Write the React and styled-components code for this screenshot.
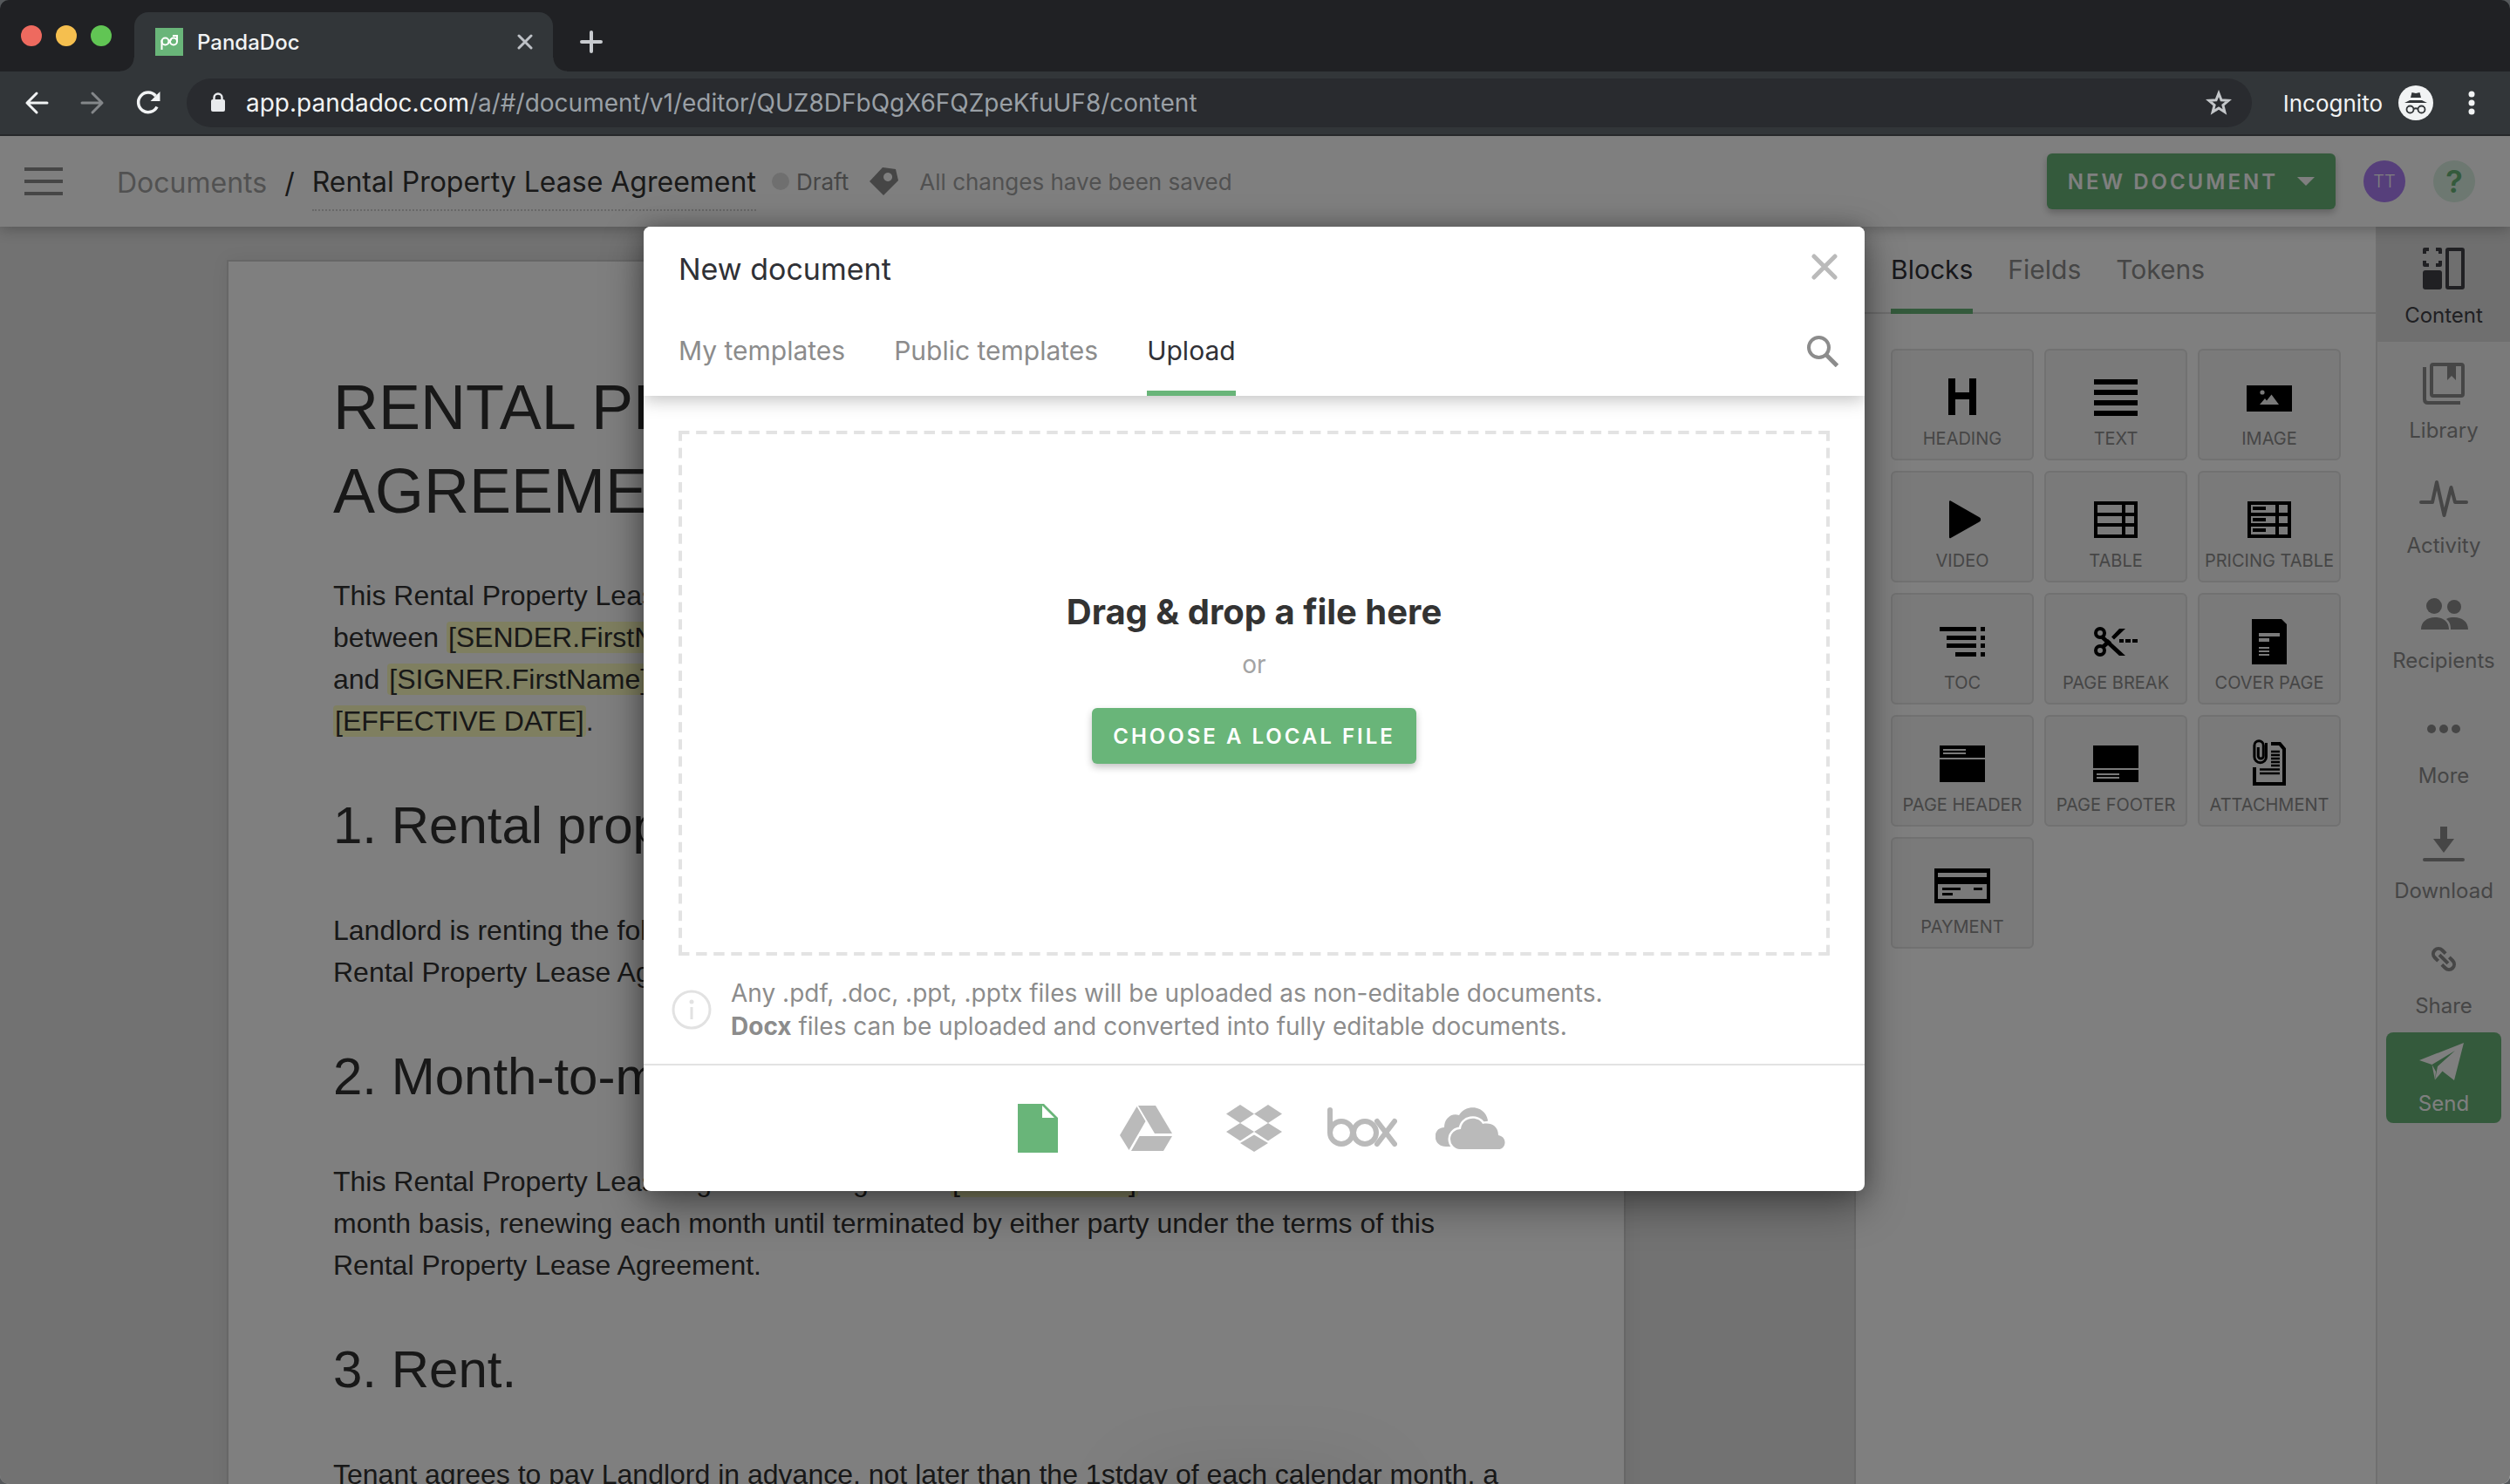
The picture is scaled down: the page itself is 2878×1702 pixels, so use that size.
import React from "react";
import styled, { createGlobalStyle, css } from "styled-components";

const ui = `Inter, "Open Sans", "Liberation Sans", sans-serif`;
const doc = `"Liberation Sans", Arial, sans-serif`;
const green = "#69b579";

const Global = createGlobalStyle`
  *, *::before, *::after { box-sizing: border-box; }
  html, body { margin: 0; background: #55585b; }
  body { font-family: ${ui}; overflow: hidden; }
  button { font: inherit; color: inherit; border: 0; padding: 0; margin: 0; background: none; cursor: pointer; }
  a { color: inherit; text-decoration: none; }
  h1, h2, p { margin: 0; font-weight: 400; }
  svg { display: block; flex: none; }
`;

const Window = styled.div`
  height: 100vh;
  display: flex;
  flex-direction: column;
  overflow: hidden;
  border-radius: 10px;
`;

/* ---------- Browser chrome ---------- */

const TabStrip = styled.div`
  display: flex;
  align-items: center;
  height: 82px;
  background: #202124;
`;

const Lights = styled.div`
  display: flex;
  gap: 16px;
  padding: 0 26px 0 24px;
`;

const Light = styled.span`
  width: 24px;
  height: 24px;
  border-radius: 50%;
  background: ${(p) => p.$color};
`;

const BrowserTab = styled.div`
  position: relative;
  align-self: flex-end;
  display: flex;
  align-items: center;
  gap: 16px;
  width: 480px;
  height: 68px;
  padding: 0 20px 0 24px;
  border-radius: 16px 16px 0 0;
  background: #323639;
  color: #f1f3f4;
  font-size: 24px;
  font-weight: 500;

  &::before,
  &::after {
    content: "";
    position: absolute;
    bottom: 0;
    width: 16px;
    height: 16px;
  }
  &::before {
    left: -16px;
    background: radial-gradient(circle at 0 0, #202124 15px, #323639 16px);
  }
  &::after {
    right: -16px;
    background: radial-gradient(circle at 100% 0, #202124 15px, #323639 16px);
  }
`;

const TabTitle = styled.span`
  flex: 1;
`;

const ChromeButton = styled.button`
  display: grid;
  place-items: center;
  width: ${(p) => p.$size || 64}px;
  height: ${(p) => p.$size || 64}px;
  color: ${(p) => p.$color || "#f1f3f4"};
`;

const NewTab = styled(ChromeButton)`
  margin: 14px 0 0 28px;
`;

const Toolbar = styled.div`
  display: flex;
  align-items: center;
  height: 74px;
  padding: 0 12px 0 10px;
  background: #323639;
  border-bottom: 2px solid #26282a;
`;

const AddressBar = styled.div`
  flex: 1;
  display: flex;
  align-items: center;
  gap: 22px;
  height: 56px;
  margin: 0 36px 0 12px;
  padding: 0 6px 0 26px;
  border-radius: 28px;
  background: #292b2f;
  color: #9aa0a6;
  font-size: 28px;
`;

const Url = styled.span`
  flex: 1;
  white-space: nowrap;
`;

const Host = styled.span`
  color: #f1f3f4;
`;

const Incognito = styled.div`
  display: flex;
  align-items: center;
  gap: 18px;
  margin-right: 12px;
  color: #f1f3f4;
  font-size: 26px;
`;

/* ---------- App frame ---------- */

const AppArea = styled.div`
  position: relative;
  flex: 1;
  min-height: 0;
  display: flex;
  flex-direction: column;
  overflow: hidden;
  background: #e4e4e4;
`;

const Header = styled.header`
  position: relative;
  z-index: 1;
  display: flex;
  align-items: center;
  height: 104px;
  flex: none;
  padding: 0 40px 0 28px;
  background: #fff;
  box-shadow: 0 2px 16px rgba(0, 0, 0, 0.28);
`;

const Crumbs = styled.nav`
  display: flex;
  align-items: center;
  gap: 20px;
  margin-left: 66px;
  padding-top: 4px;
  font-size: 32px;
  line-height: 62px;
  color: #333;
  white-space: nowrap;
`;

const CrumbLink = styled.a`
  color: #a3a3a3;
`;

const DocName = styled.span`
  border-bottom: 2px dotted #d0d0d0;
`;

const Status = styled.div`
  flex: 1;
  display: flex;
  align-items: center;
  gap: 24px;
  margin-left: 18px;
  font-size: 26px;
  color: #a3a3a3;
  white-space: nowrap;
`;

const Draft = styled.span`
  display: flex;
  align-items: center;
  gap: 8px;
  color: #8c8c8c;

  &::before {
    content: "";
    width: 20px;
    height: 20px;
    border-radius: 50%;
    background: #dedede;
  }
`;

const PrimaryButton = styled.button`
  display: flex;
  align-items: center;
  justify-content: center;
  gap: 22px;
  height: 64px;
  padding: 0 24px;
  min-width: ${(p) => p.$min}px;
  border-radius: 6px;
  background: ${green};
  color: #fff;
  font-size: 24px;
  font-weight: 600;
  letter-spacing: 3px;
  white-space: nowrap;
  box-shadow: 0 4px 8px rgba(0, 0, 0, 0.24);
`;

const Round = styled.button`
  display: grid;
  place-items: center;
  width: 48px;
  height: 48px;
  margin-left: 32px;
  border-radius: 50%;
  background: ${(p) => p.$bg};
  color: ${(p) => p.$color};
  font-size: ${(p) => p.$font}px;
  font-weight: ${(p) => p.$weight};
`;

const Body = styled.div`
  flex: 1;
  min-height: 0;
  display: flex;
`;

/* ---------- Document ---------- */

const Canvas = styled.main`
  flex: 1;
  min-width: 0;
  display: flex;
  justify-content: center;
  align-items: flex-start;
  padding: 38px 2px 0 0;
  overflow: hidden;
`;

const Sheet = styled.article`
  width: 1604px;
  min-height: 2200px;
  padding: 119px 120px;
  border: 2px solid #cfcfcf;
  background: #fff;
  box-shadow: 0 0 20px rgba(0, 0, 0, 0.06);
  color: #303030;
  font-family: ${doc};
`;

const Title = styled.h1`
  font-size: 72px;
  line-height: 96px;
  margin-bottom: 48px;
`;

const Section = styled.h2`
  font-size: 60px;
  line-height: 80px;
  margin: 56px 0;
`;

const Para = styled.p`
  font-size: 32px;
  line-height: 48px;
`;

const Token = styled.span`
  padding: 0 2px;
  border-radius: 4px;
  background: #ffffc0;
`;

/* ---------- Blocks panel ---------- */

const Panel = styled.aside`
  width: 598px;
  flex: none;
  border-left: 2px solid #d4d4d4;
  background: #fff;
`;

const TabList = styled.div`
  display: flex;
  gap: ${(p) => p.$gap}px;
  padding: 0 40px;
`;

const PanelTabs = styled(TabList)`
  border-bottom: 2px solid #dedede;
`;

const tabLook = css`
  font-size: 30px;
  white-space: nowrap;
  color: ${(p) => (p.$active ? "#303136" : "#8c8c8c")};
  border-bottom: 6px solid ${(p) => (p.$active ? green : "transparent")};
`;

const PanelTab = styled.button`
  ${tabLook}
  height: 100px;
  margin-bottom: -2px;
  padding-top: 4px;
`;

const TileGrid = styled.div`
  display: grid;
  grid-template-columns: repeat(3, 164px);
  gap: 12px;
  padding: 40px;
`;

const Tile = styled.button`
  display: flex;
  flex-direction: column;
  align-items: center;
  gap: 3px;
  height: 128px;
  padding-top: 22px;
  border: 2px solid #e2e2e2;
  border-radius: 6px;
  background: #f4f4f4;
  color: #8c8c8c;
  font-size: 20px;
  line-height: 24px;
  white-space: nowrap;

  svg {
    color: #000;
  }
`;

/* ---------- Right rail ---------- */

const Rail = styled.nav`
  width: 154px;
  flex: none;
  display: flex;
  flex-direction: column;
  border-left: 2px solid #e0e0e0;
  background: #f4f4f4;
`;

const RailItem = styled.button`
  display: flex;
  flex-direction: column;
  align-items: center;
  gap: 11px;
  height: 132px;
  padding-top: 20px;
  font-size: 24px;
  line-height: 30px;
  color: ${(p) => (p.$active ? "#404147" : "#8c8c8c")};
  background: ${(p) => (p.$active ? "#dedede" : "transparent")};
`;

const SendButton = styled.button`
  display: flex;
  flex-direction: column;
  align-items: center;
  gap: 11px;
  height: 104px;
  margin: 0 10px;
  padding-top: 12px;
  border-radius: 8px;
  background: ${green};
  color: #fff;
  font-size: 24px;
  line-height: 30px;
`;

/* ---------- Overlay and dialog ---------- */

const Overlay = styled.div`
  position: absolute;
  inset: 0;
  z-index: 2;
  display: flex;
  justify-content: center;
  align-items: flex-start;
  padding: 104px 2px 0 0;
  background: rgba(0, 0, 0, 0.5);
`;

const Toast = styled.div`
  position: absolute;
  left: calc(50% - 140px);
  top: 100%;
  width: 280px;
  height: 60px;
  border-radius: 30px;
  box-shadow: 0 0 100px rgba(0, 0, 0, 0.14);
`;

const Dialog = styled.section`
  width: 1400px;
  max-width: 96%;
  border-radius: 8px;
  overflow: clip;
  background: #fff;
  color: #303136;
  box-shadow: 0 16px 48px rgba(0, 0, 0, 0.4), 0 0 24px rgba(0, 0, 0, 0.24);
`;

const DialogHead = styled.div`
  position: relative;
  background: #fff;
  box-shadow: 0 4px 20px rgba(0, 0, 0, 0.26);
`;

const DialogRow = styled.div`
  display: flex;
  align-items: center;
  justify-content: space-between;
  height: ${(p) => p.$height}px;
  padding-right: ${(p) => p.$end}px;
`;

const DialogTitle = styled.h2`
  padding: 4px 0 0 40px;
  font-size: 34px;
`;

const DialogTab = styled.button`
  ${tabLook}
  height: 102px;
  padding-top: 4px;
`;

const IconButton = styled.button`
  display: grid;
  place-items: center;
  width: 40px;
  height: 40px;
  color: ${(p) => p.$color};
`;

const DialogBody = styled.div`
  padding: 40px 40px 24px;
`;

const dash = "#e3e3e3";
const DropZone = styled.div`
  display: flex;
  flex-direction: column;
  align-items: center;
  justify-content: center;
  height: 602px;
  padding-bottom: 40px;
  --h: linear-gradient(90deg, ${dash} 12px, transparent 12px);
  --v: linear-gradient(180deg, ${dash} 12px, transparent 12px);
  --w: calc((100% - 12px) / 65) 4px;
  --t: 4px calc((100% - 12px) / 30);
  background-image: var(--h), var(--h), var(--v), var(--v);
  background-size: var(--w), var(--w), var(--t), var(--t);
  background-repeat: repeat-x, repeat-x, repeat-y, repeat-y;
  background-position: left top, left bottom, left top, right top;
`;

const DropTitle = styled.p`
  font-size: 40px;
  line-height: 56px;
  font-weight: 700;
  color: #333;
`;

const Or = styled.p`
  margin: 12px 0 30px;
  font-size: 28px;
  line-height: 40px;
  color: #a3a3a3;
`;

const Note = styled.div`
  display: flex;
  align-items: center;
  gap: 22px;
  margin: 24px 0 0 -8px;
  font-size: 28px;
  line-height: 38px;
  color: #8c8c8c;
`;

const Sources = styled.div`
  display: flex;
  justify-content: center;
  height: 146px;
  border-top: 2px solid #e2e2e2;
`;

const Source = styled.button`
  display: grid;
  place-items: center;
  width: 124px;
  color: ${(p) => (p.$active ? green : "#bababa")};
`;

/* ---------- Drawings ---------- */

const Art = ({ w, h, children, ...rest }) => (
  <svg width={w} height={h} viewBox={`0 0 ${w} ${h}`} fill="currentColor" aria-hidden="true" {...rest}>
    {children}
  </svg>
);

const Stroke = ({ width = 4, ...rest }) => (
  <Art fill="none" stroke="currentColor" strokeWidth={width} strokeLinecap="round" strokeLinejoin="round" {...rest} />
);

const tileHole = "#f4f4f4";
const Bars = ({ list, fill }) =>
  list.map(([x, y, w, h]) => <rect key={`${x}-${y}`} x={x} y={y} width={w} height={h} fill={fill} />);

const tableCells = [15, 28, 40].flatMap((y, i) => [
  [11, y, 28, i === 1 ? 8 : 9],
  [43, y, 10, i === 1 ? 8 : 9],
]);

const tiles = [
  ["HEADING", <Bars list={[[16, 10, 8, 42], [40, 10, 8, 42], [20, 26, 24, 8]]} />],
  ["TEXT", <Bars list={[[7, 11, 50, 6], [7, 23, 50, 6], [7, 35, 50, 6], [7, 47, 50, 6]]} />],
  ["IMAGE", <>
    <rect x="6" y="18" width="52" height="30" />
    <g fill={tileHole}><circle cx="24" cy="26" r="2.6" /><path d="M21 40l6-7 2 2.6 5.5-7L43 40z" /></g>
  </>],
  ["VIDEO", <path d="M17 11.5c0-1 1-1.6 1.8-1L52 29.5c1.6 1.2 1.6 3.6 0 4.8L18.8 53c-.8.6-1.8 0-1.8-1z" />],
  ["TABLE", <>
    <rect x="7" y="11" width="50" height="42" /><Bars list={tableCells} fill={tileHole} />
  </>],
  ["PRICING TABLE", <>
    <rect x="7" y="11" width="50" height="42" /><Bars list={tableCells} fill={tileHole} />
    <Bars list={[[13, 17, 15, 4], [13, 30, 15, 4], [13, 42, 15, 4]]} />
  </>],
  ["TOC", <Bars list={[[6, 15, 42, 5], [53, 15, 5, 5], [14, 25, 34, 5], [53, 25, 5, 5], [14, 34, 34, 5], [53, 34, 5, 5], [24, 44, 24, 5], [53, 44, 5, 5]]} />],
  ["PAGE BREAK", <>
    <g fill="none" stroke="currentColor" strokeWidth="4"><circle cx="14" cy="22" r="5" /><circle cx="14" cy="42" r="5" /></g>
    <path d="M17.5 24.5L43 48h-7L15 28.5zM16 36l7-7 4 3.5-8 7zM27 26.500L36 17h7L30 29.500z" />
    <Bars list={[[36, 29, 5, 4], [43, 29, 6, 4], [51, 29, 6, 4]]} />
  </>],
  ["COVER PAGE", <>
    <path d="M12 6h34l6 6v46H12z" />
    <Bars fill={tileHole} list={[[20, 22, 24, 4], [20, 28, 12, 4], [20, 38, 12, 2], [20, 42, 12, 2], [20, 46, 12, 2]]} />
  </>],
  ["PAGE HEADER", <>
    <Bars list={[[6, 11, 52, 14], [6, 27, 52, 26]]} />
    <Bars fill={tileHole} list={[[10, 15, 26, 2], [10, 19, 26, 2]]} />
  </>],
  ["PAGE FOOTER", <>
    <Bars list={[[6, 11, 52, 26], [6, 39, 52, 14]]} />
    <Bars fill={tileHole} list={[[10, 43, 26, 2], [10, 47, 26, 2]]} />
  </>],
  ["ATTACHMENT", <g fill="none" stroke="currentColor">
    <path strokeWidth="4" d="M34 9h10l5 6v40H15V36" />
    <path strokeWidth="3" d="M28.5 8v16a6.800 6.800 0 0 1-13.6 0V11a5.200 5.200 0 0 1 10.4 0v12a3 3 0 0 1-6 0V13" />
    <path strokeWidth="2.5" d="M34 18h10M34 22h10M34 26h10M34 30h10M34 34h10M21 38.5h23M21 43h23" />
  </g>],
  ["PAYMENT", <>
    <rect y="12" width="64" height="40" />
    <Bars fill={tileHole} list={[[4, 17, 56, 5], [4, 30, 56, 17]]} />
    <Bars list={[[9, 34, 21, 3], [45, 34, 10, 3], [9, 40, 12, 3]]} />
  </>],
];

const round = { fill: "none", stroke: "currentColor", strokeWidth: 4, strokeLinejoin: "round" };

const railItems = [
  ["Content", <>
    <path {...round} d="M6 11V6h5M19 6h5v5M24 19v5h-5M11 24H6v-5" />
    <rect x="4" y="30" width="22" height="22" rx="3" />
    <rect {...round} x="32" y="6" width="18" height="44" rx="1" />
  </>],
  ["Library", <>
    <rect {...round} x="14" y="6" width="36" height="36" rx="2" />
    <path d="M32 6h10v18l-5-5-5 5z" />
    <path {...round} strokeLinecap="butt" d="M6 9v37q0 4 4 4h37" />
  </>],
  ["Activity", <path {...round} strokeLinecap="round" d="M2 32h13l5-23 8.500 38 8-32L41 32h13" />],
  ["Recipients", <>
    <circle cx="17" cy="19" r="9" /><circle cx="40" cy="20" r="8" />
    <path d="M2 46c0-9 7-14 16-14s16 5 16 14zM31 34c3-2 6-2 9-2 9 0 16 5 16 14H36c0-5-1-9-5-12z" />
  </>],
  ["More", <><circle cx="14" cy="28" r="5" /><circle cx="28" cy="28" r="5" /><circle cx="42" cy="28" r="5" /></>],
  ["Download", <><path d="M24 8h8v14h8L28 38 16 22h8z" /><rect x="4" y="44" width="48" height="4" rx="2" /></>],
  ["Share", <g {...round} transform="translate(28 28) rotate(45)">
    <path d="M-3-6h-5.500a6 6 0 0 0 0 12H-3M3-6h5.500a6 6 0 0 1 0 12H3M-7 0H7" />
  </g>],
];

const sources = [
  ["Local file", <Art w={46} h={56}><path fillRule="evenodd" d="M0 0h30l16 16v40H0zM28 2v14h14z" /></Art>],
  ["Google Drive", <Art w={60} h={52}>
    <path d="M21 0h20l19 32H40zM22.600 35H60l-10 17H13zM19.500 1l10 17-19 33L0 34z" />
  </Art>],
  ["Dropbox", <Art w={64} h={54}>
    <path d="M16 0l16 10.500L16 21 0 10.500zM48 0l16 10.500L48 21 32 10.500zM16 21l16 10-16 10.500L0 31zM48 21l16 10-16 10.500L32 31zM32 34.500L48 44 32 54 16 44z" />
  </Art>],
  ["Box", <Stroke w={80} h={52} width={6}>
    <line x1="3" y1="5" x2="3" y2="30" />
    <circle cx="16" cy="31" r="13" /><circle cx="43" cy="31" r="13" />
    <line x1="57" y1="18" x2="77" y2="44" /><line x1="77" y1="18" x2="57" y2="44" />
  </Stroke>],
  ["OneDrive", <Art w={80} h={48}>
    <path d="M16 45h-4C-4 45-4 23 10 23c0-10 8-17 17-14C34-4 57-3 60 15L44 40z" />
    <path stroke="#fff" strokeWidth="5" d="M28 48a11 11 0 0 1 1-23c1-14 20-16 25-6 9-2 18 2 18 13 11 2 9 16 0 16z" />
    <path d="M28 48a11 11 0 0 1 1-23c1-14 20-16 25-6 9-2 18 2 18 13 11 2 9 16 0 16z" />
  </Art>],
];

/* ---------- Page ---------- */

function Browser() {
  return (
    <>
      <TabStrip>
        <Lights>
          <Light $color="#ee6a5f" /><Light $color="#f5bf4f" /><Light $color="#61c554" />
        </Lights>
        <BrowserTab>
          <Art w={32} h={32}>
            <rect width="32" height="32" fill={green} />
            <g fill="none" stroke="#fff" strokeWidth="2">
              <path d="M7.500 25V14" />
              <circle cx="11.500" cy="15.500" r="4" /><circle cx="21" cy="15.500" r="4" />
              <path d="M14.500 18l4-5M25 16V9h-5" />
            </g>
          </Art>
          <TabTitle>PandaDoc</TabTitle>
          <ChromeButton $size={24} $color="#bdc1c6" aria-label="Close tab">
            <Stroke w={18} h={18} width={3}><path d="M2 2l14 14M16 2L2 16" /></Stroke>
          </ChromeButton>
        </BrowserTab>
        <NewTab $size={32} $color="#c8cbcf" aria-label="New tab">
          <Stroke w={26} h={26} width={4}><path d="M13 2v22M2 13h22" /></Stroke>
        </NewTab>
      </TabStrip>
      <Toolbar>
        <ChromeButton aria-label="Back">
          <Stroke w={28} h={28} width={3}><path d="M26 14H3M14 3L3 14l11 11" /></Stroke>
        </ChromeButton>
        <ChromeButton $color="#84878a" aria-label="Forward">
          <Stroke w={28} h={28} width={3}><path d="M2 14h23M14 3l11 11-11 11" /></Stroke>
        </ChromeButton>
        <ChromeButton aria-label="Reload">
          <Art w={28} h={28}>
            <path fill="none" stroke="currentColor" strokeWidth="3.5" d="M24 18.500A11.300 11.300 0 1 1 22.500 6" />
            <path d="M27.500 1v11h-11z" />
          </Art>
        </ChromeButton>
        <AddressBar>
          <Art w={20} h={24}>
            <rect x="2" y="8" width="16" height="14" rx="2" fill="#e8eaed" />
            <path fill="none" stroke="#e8eaed" strokeWidth="2.5" d="M5.500 9V6a4.500 4.500 0 0 1 9 0v3" />
          </Art>
          <Url><Host>app.pandadoc.com</Host>/a/#/document/v1/editor/QUZ8DFbQgX6FQZpeKfuUF8/content</Url>
          <ChromeButton $color="#c4c7ca" aria-label="Bookmark this page">
            <Art w={30} h={30}>
              <path fill="none" stroke="currentColor" strokeWidth="3" d="M15 4l3 7.700 8.200.600-6.300 5.200 2 8L15 21l-6.900 4.500 2-8-6.300-5.200 8.200-.600z" />
            </Art>
          </ChromeButton>
        </AddressBar>
        <Incognito>
          Incognito
          <Art w={40} h={40}>
            <circle cx="20" cy="20" r="20" fill="#f1f3f4" />
            <g fill="#323639">
              <path d="M15.500 8l4.500 1 4.500-1 1.500 6H14zM7 20l6-3h14l6 3z" />
              <g fill="none" stroke="#323639" strokeWidth="1.8">
                <circle cx="13.500" cy="27.500" r="4" /><circle cx="26.500" cy="27.500" r="4" /><path d="M17.500 27q2.500-1.500 5 0" />
              </g>
            </g>
          </Art>
        </Incognito>
        <ChromeButton aria-label="Browser menu">
          <Art w={8} h={28}><circle cx="4" cy="4" r="3.500" /><circle cx="4" cy="14" r="3.500" /><circle cx="4" cy="24" r="3.500" /></Art>
        </ChromeButton>
      </Toolbar>
    </>
  );
}

function AppHeader() {
  return (
    <Header>
      <IconButton $color="#8c8c8c" aria-label="Menu">
        <Art w={44} h={32}><Bars list={[[0, 0, 44, 4], [0, 14, 44, 4], [0, 28, 44, 4]]} /></Art>
      </IconButton>
      <Crumbs aria-label="Breadcrumb">
        <CrumbLink href="#documents">Documents</CrumbLink>
        <span>/</span>
        <DocName>Rental Property Lease Agreement</DocName>
      </Crumbs>
      <Status>
        <Draft>Draft</Draft>
        <Art w={33} h={32} color="#8c8c8c">
          <path fillRule="evenodd" d="M15 0l15 2 3 13-17 17L0 16zM21 6a5 5 0 1 0 .1 0z" />
        </Art>
        <span>All changes have been saved</span>
      </Status>
      <PrimaryButton $min={330}>
        NEW DOCUMENT
        <Art w={20} h={10}><path d="M0 0h20L10 10z" /></Art>
      </PrimaryButton>
      <Round $bg="#ac7ef6" $color="#fff" $font={20} $weight={300}>TT</Round>
      <Round $bg="#daf0e2" $color={green} $font={36} $weight={600}>?</Round>
    </Header>
  );
}

function Agreement() {
  return (
    <Canvas>
      <Sheet>
        <Title>RENTAL PROPERTY LEASE<br />AGREEMENT</Title>
        <Para>
          This Rental Property Lease Agreement is made by and<br />
          between <Token>[SENDER.FirstName]</Token> <Token>[SENDER.LastName]</Token><br />
          and <Token>[SIGNER.FirstName]</Token> <Token>[SIGNER.LastName]</Token> on<br />
          <Token>[EFFECTIVE DATE]</Token>.
        </Para>
        <Section>1. Rental property.</Section>
        <Para>
          Landlord is renting the following property to Tenant under this<br />
          Rental Property Lease Agreement.
        </Para>
        <Section>2. Month-to-month.</Section>
        <Para>
          This Rental Property Lease Agreement begins on <Token>[START DATE]</Token> and continues on a month-to-<br />
          month basis, renewing each month until terminated by either party under the terms of this<br />
          Rental Property Lease Agreement.
        </Para>
        <Section>3. Rent.</Section>
        <Para>Tenant agrees to pay Landlord in advance, not later than the 1stday of each calendar month, a</Para>
      </Sheet>
    </Canvas>
  );
}

function SidePanel() {
  return (
    <Panel>
      <PanelTabs role="tablist" $gap={40}>
        <PanelTab role="tab" $active>Blocks</PanelTab>
        <PanelTab role="tab">Fields</PanelTab>
        <PanelTab role="tab">Tokens</PanelTab>
      </PanelTabs>
      <TileGrid>
        {tiles.map(([name, art]) => (
          <Tile key={name}><Art w={64} h={64}>{art}</Art>{name}</Tile>
        ))}
      </TileGrid>
    </Panel>
  );
}

function ActionRail() {
  return (
    <Rail>
      {railItems.map(([name, art]) => (
        <RailItem key={name} $active={name === "Content"}><Art w={56} h={56}>{art}</Art>{name}</RailItem>
      ))}
      <SendButton>
        <Art w={56} h={44}>
          <path d="M51 0L0 20l14.500 5L41 9 21 27l-3 15.500 8.500-10L40 43z" />
          <path d="M14.500 25L18 42.500 19 33z" />
        </Art>
        Send
      </SendButton>
    </Rail>
  );
}

function NewDocumentDialog() {
  return (
    <Overlay>
      <Dialog role="dialog" aria-labelledby="dialog-title">
        <DialogHead>
          <DialogRow $height={92} $end={26}>
            <DialogTitle id="dialog-title">New document</DialogTitle>
            <IconButton $color="#bababa" aria-label="Close">
              <Stroke w={30} h={30} width={5}><path d="M3 3l24 24M27 3L3 27" /></Stroke>
            </IconButton>
          </DialogRow>
          <DialogRow $height={102} $end={28}>
            <TabList role="tablist" $gap={56}>
              <DialogTab role="tab">My templates</DialogTab>
              <DialogTab role="tab">Public templates</DialogTab>
              <DialogTab role="tab" $active>Upload</DialogTab>
            </TabList>
            <IconButton $color="#8c8c8c" aria-label="Search">
              <Art w={36} h={36} fill="none" stroke="currentColor">
                <circle cx="13.500" cy="13.500" r="11.500" strokeWidth="4" /><path strokeWidth="5" d="M22 22l12.500 12.500" />
              </Art>
            </IconButton>
          </DialogRow>
        </DialogHead>
        <DialogBody>
          <DropZone>
            <DropTitle>Drag &amp; drop a file here</DropTitle>
            <Or>or</Or>
            <PrimaryButton $min={368}>CHOOSE A LOCAL FILE</PrimaryButton>
          </DropZone>
          <Note>
            <Art w={46} h={46} color="#e2e2e2">
              <circle cx="23" cy="23" r="21" fill="none" stroke="currentColor" strokeWidth="3" />
              <circle cx="23" cy="14" r="2.500" /><rect x="21.500" y="20" width="3" height="14" />
            </Art>
            <p>
              Any .pdf, .doc, .ppt, .pptx files will be uploaded as non-editable documents.<br />
              <strong>Docx</strong> files can be uploaded and converted into fully editable documents.
            </p>
          </Note>
        </DialogBody>
        <Sources>
          {sources.map(([name, art], i) => (
            <Source key={name} $active={i === 0} aria-label={name}>{art}</Source>
          ))}
        </Sources>
      </Dialog>
      <Toast />
    </Overlay>
  );
}

export default function App() {
  return (
    <Window>
      <Global />
      <Browser />
      <AppArea>
        <AppHeader />
        <Body>
          <Agreement />
          <SidePanel />
          <ActionRail />
        </Body>
        <NewDocumentDialog />
      </AppArea>
    </Window>
  );
}
